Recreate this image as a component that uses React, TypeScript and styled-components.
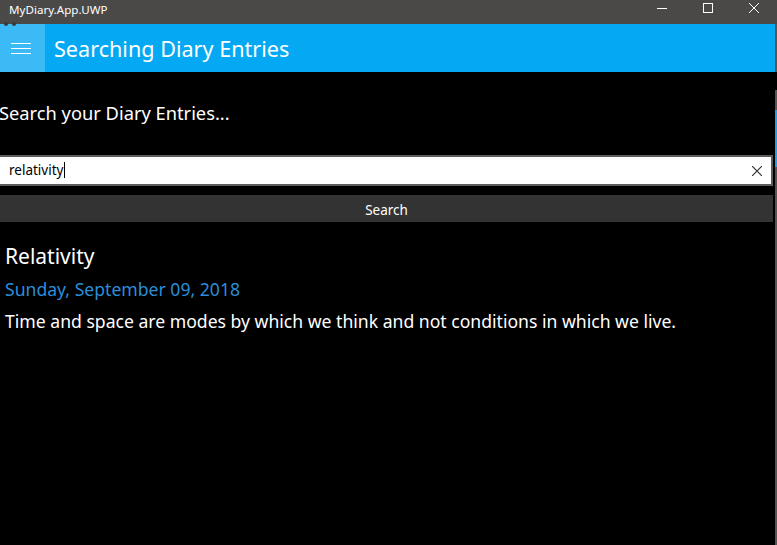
import React from "react";
import styled, { createGlobalStyle } from "styled-components";

const Global = createGlobalStyle`
  html, body { margin: 0; padding: 0; background: #000; }
  body { width: 777px; height: 545px; overflow: hidden; font-family: "Noto Sans", "Open Sans", sans-serif; }
  #root { width: 777px; height: 545px; }
`;

const Window = styled.div`
  width: 777px;
  height: 545px;
  display: flex;
  flex-direction: column;
  background: #000;
  position: relative;
`;

const TitleBar = styled.div`
  height: 24px;
  flex: none;
  background: #4b4948;
  display: flex;
  align-items: center;
  color: #fff;
  font-size: 11.6px;
  padding-left: 9px;
`;

const TitleText = styled.div`
  flex: 1;
  margin-top: -5px;
`;

const WinButton = styled.div`
  width: 46px;
  height: 24px;
  display: flex;
  align-items: flex-start;
  justify-content: center;
  padding-top: 3px;
  box-sizing: border-box;
`;

const DebugDots = styled.div`
  position: absolute;
  left: 4px;
  top: 22px;
  display: flex;
  gap: 4px;
`;

const Dot = styled.span`
  width: 4px;
  height: 4px;
  border-radius: 50%;
  background: #3a3a3a;
`;

const Body = styled.div`
  flex: 1;
  display: flex;
`;

const Main = styled.div`
  width: 775px;
  display: flex;
  flex-direction: column;
`;

const Edge = styled.div`
  width: 2px;
  display: flex;
  flex-direction: column;
`;

const EdgeSeg = styled.div<{ $h: number; $c: string }>`
  height: ${(p) => p.$h}px;
  flex: ${(p) => (p.$h === 0 ? 1 : "none")};
  background: ${(p) => p.$c};
`;

const Header = styled.div`
  height: 48px;
  background: #05a8f3;
  display: flex;
  align-items: center;
`;

const Hamburger = styled.div`
  width: 45px;
  height: 48px;
  background: #3bbaf5;
  display: flex;
  flex-direction: column;
  justify-content: center;
  align-items: flex-start;
  padding-left: 11px;
  box-sizing: border-box;
  gap: 4px;
`;

const Bar = styled.span`
  width: 20px;
  height: 1px;
  background: #fff;
`;

const HeaderTitle = styled.div`
  color: #fff;
  font-size: 21.6px;
  margin-left: 9px;
  margin-top: 0px;
`;

const Prompt = styled.div`
  color: #fff;
  font-size: 18.3px;
  margin: 28px 0 0 -1px;
  height: 26px;
`;

const SearchBox = styled.div`
  margin-top: 29px;
  width: 773px;
  height: 31px;
  box-sizing: border-box;
  border: 2px solid #5c5c5c;
  border-left: none;
  background: #fff;
  display: flex;
  align-items: center;
  padding-left: 9px;
  padding-right: 9px;
`;

const InputText = styled.div`
  flex: 1;
  color: #000;
  font-size: 13.5px;
  display: flex;
  align-items: center;
  margin-top: -2px;
`;

const Caret = styled.span`
  width: 1px;
  height: 16px;
  background: #000;
  margin-left: 1px;
`;

const SearchButton = styled.div`
  margin-top: 9px;
  width: 773px;
  height: 27px;
  background: #333333;
  color: #fff;
  font-size: 13.5px;
  display: flex;
  align-items: center;
  justify-content: center;
  padding-top: 2px;
  box-sizing: border-box;
`;

const Entry = styled.div`
  padding-left: 5px;
  display: flex;
  flex-direction: column;
`;

const EntryTitle = styled.div`
  color: #fff;
  font-size: 21px;
  margin-top: 20px;
  height: 28px;
`;

const EntryDate = styled.div`
  color: #2b8ed9;
  font-size: 17.6px;
  margin-top: 7px;
  height: 26px;
`;

const EntryText = styled.div`
  color: #fff;
  font-size: 17.6px;
  margin-top: 6px;
`;

export default function App() {
  return (
    <>
      <Global />
      <Window>
        <TitleBar>
          <TitleText>MyDiary.App.UWP</TitleText>
          <WinButton>
            <svg width="10" height="10" viewBox="0 0 10 10">
              <path d="M0 5.5h10" stroke="#fff" strokeWidth="1" />
            </svg>
          </WinButton>
          <WinButton>
            <svg width="10" height="10" viewBox="0 0 10 10">
              <rect x="0.5" y="0.5" width="9" height="9" fill="none" stroke="#fff" strokeWidth="1" />
            </svg>
          </WinButton>
          <WinButton>
            <svg width="10" height="10" viewBox="0 0 10 10">
              <path d="M0 0L10 10M10 0L0 10" stroke="#fff" strokeWidth="1" />
            </svg>
          </WinButton>
        </TitleBar>
        <DebugDots>
          <Dot />
          <Dot />
        </DebugDots>
        <Body>
          <Main>
            <Header>
              <Hamburger>
                <Bar />
                <Bar />
                <Bar />
              </Hamburger>
              <HeaderTitle>Searching Diary Entries</HeaderTitle>
            </Header>
            <Prompt>Search your Diary Entries...</Prompt>
            <SearchBox>
              <InputText>
                relativity
                <Caret />
              </InputText>
              <svg width="10" height="10" viewBox="0 0 10 10">
                <path d="M0 0L10 10M10 0L0 10" stroke="#333" strokeWidth="1.2" />
              </svg>
            </SearchBox>
            <SearchButton>Search</SearchButton>
            <Entry>
              <EntryTitle>Relativity</EntryTitle>
              <EntryDate>Sunday, September 09, 2018</EntryDate>
              <EntryText>
                Time and space are modes by which we think and not conditions in which we live.
              </EntryText>
            </Entry>
          </Main>
          <Edge>
            <EdgeSeg $h={48} $c="#555" />
            <EdgeSeg $h={18} $c="#000" />
            <EdgeSeg $h={20} $c="#555" />
            <EdgeSeg $h={57} $c="#1aa0e8" />
            <EdgeSeg $h={0} $c="#555" />
          </Edge>
        </Body>
      </Window>
    </>
  );
}
